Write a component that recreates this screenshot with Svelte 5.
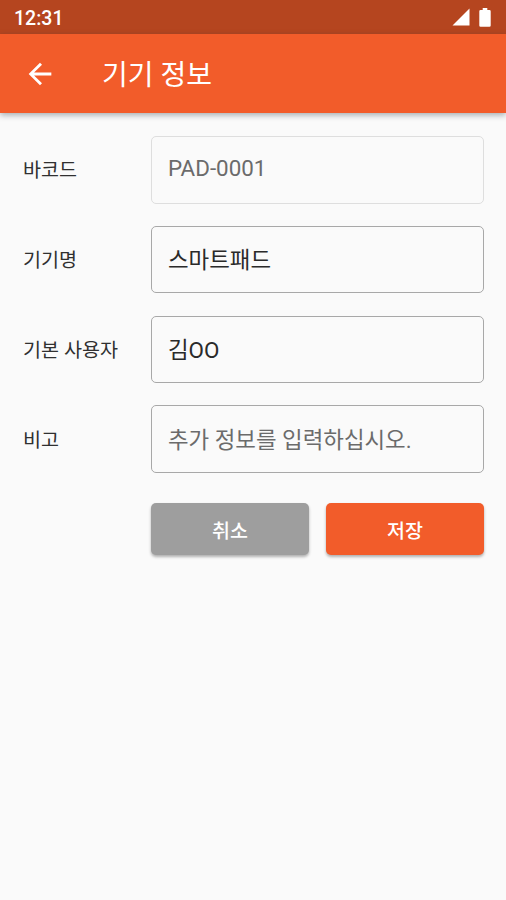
<script lang="ts">
  interface Field {
    id: string;
    label: string;
    value: string;
    placeholder?: string;
    disabled?: boolean;
  }

  let fields = $state<Field[]>([
    { id: "barcode", label: "바코드", value: "PAD-0001", disabled: true },
    { id: "name", label: "기기명", value: "스마트패드" },
    { id: "user", label: "기본 사용자", value: "김OO" },
    { id: "note", label: "비고", value: "", placeholder: "추가 정보를 입력하십시오." },
  ]);
</script>

<div class="screen">
  <div class="status-bar">
    <span class="clock">12:31</span>
    <div class="status-icons">
      <svg width="18" height="18" viewBox="0 0 18 18" aria-hidden="true">
        <path d="M17.5 0.5v17H0.5z" fill="#fff" />
      </svg>
      <svg width="12" height="19" viewBox="0 0 12 19" aria-hidden="true">
        <path d="M3.7 0h4.6v2h2.2q1.2 0 1.2 1.2v14.4q0 1.2-1.2 1.2h-9q-1.2 0-1.2-1.2V3.2q0-1.2 1.2-1.2h2.2z" fill="#fff" />
      </svg>
    </div>
  </div>

  <header class="app-bar">
    <button class="back" aria-label="뒤로">
      <svg width="34" height="34" viewBox="0 0 24 24">
        <path d="M20 11H7.83l5.59-5.59L12 4l-8 8 8 8 1.41-1.41L7.83 13H20v-2z" fill="#fff" />
      </svg>
    </button>
    <h1>기기 정보</h1>
  </header>

  <form class="form" onsubmit={(e) => e.preventDefault()}>
    {#each fields as field (field.id)}
      <div class="row">
        <label for={field.id}>{field.label}</label>
        <input
          id={field.id}
          type="text"
          placeholder={field.placeholder}
          disabled={field.disabled}
          bind:value={field.value}
        />
      </div>
    {/each}
    <div class="actions">
      <button class="btn" type="button">취소</button>
      <button class="btn primary" type="submit">저장</button>
    </div>
  </form>
</div>

<style>
  :global(body) {
    background: #fafafa;
  }

  .screen {
    min-height: 900px;
    background: #fafafa;
    font-family: Roboto, "Noto Sans CJK KR", sans-serif;
    color: #303030;
  }

  .status-bar {
    display: flex;
    align-items: center;
    justify-content: space-between;
    height: 34px;
    padding: 0 15px 0 14px;
    box-sizing: border-box;
    background: #b5451f;
  }

  .clock {
    padding-top: 2px;
    color: #fff;
    font-size: 19.5px;
    font-weight: 500;
  }

  .status-icons {
    display: flex;
    align-items: center;
    gap: 9px;
  }

  .app-bar {
    display: flex;
    align-items: center;
    height: 79px;
    background: #f25c2a;
    box-shadow: 0 2px 6px rgba(30, 50, 60, 0.4);
  }

  .back {
    display: flex;
    margin: 0 0 0 23px;
    padding: 0;
    border: none;
    background: transparent;
  }

  h1 {
    margin: 0 0 0 45px;
    padding-top: 4px;
    color: #fff;
    font-size: 28px;
    font-weight: 400;
    line-height: 40px;
  }

  .form {
    display: flex;
    flex-direction: column;
    gap: 22.3px;
    padding: 23px 22px 0 23px;
  }

  .row {
    display: grid;
    grid-template-columns: 128px 1fr;
    align-items: center;
  }

  label {
    padding-top: 3px;
    font-size: 19.6px;
    line-height: 28px;
  }

  input {
    width: 100%;
    height: 67.5px;
    padding: 0 16px 3px;
    box-sizing: border-box;
    border: 1px solid #a8a8a8;
    border-radius: 5px;
    outline: none;
    background: transparent;
    color: #2a2a2a;
    font-family: inherit;
    font-size: 22.4px;
    line-height: 34px;
  }

  input:disabled {
    border-color: #dedede;
    color: #6b6b6b;
  }

  input::placeholder {
    color: #6b6b6b;
    opacity: 1;
  }

  input:placeholder-shown {
    padding-top: 2px;
    padding-bottom: 0;
  }

  .actions {
    display: grid;
    grid-template-columns: 1fr 1fr;
    gap: 17px;
    margin: 8px 0 0 128px;
  }

  .btn {
    height: 52px;
    padding: 0;
    border: none;
    border-radius: 5px;
    background: #9e9e9e;
    box-shadow: 0 2px 3px rgba(0, 0, 0, 0.3);
    color: #fff;
    font-family: inherit;
    font-size: 19.5px;
    font-weight: 500;
  }

  .btn.primary {
    background: #f25c2a;
  }
</style>
